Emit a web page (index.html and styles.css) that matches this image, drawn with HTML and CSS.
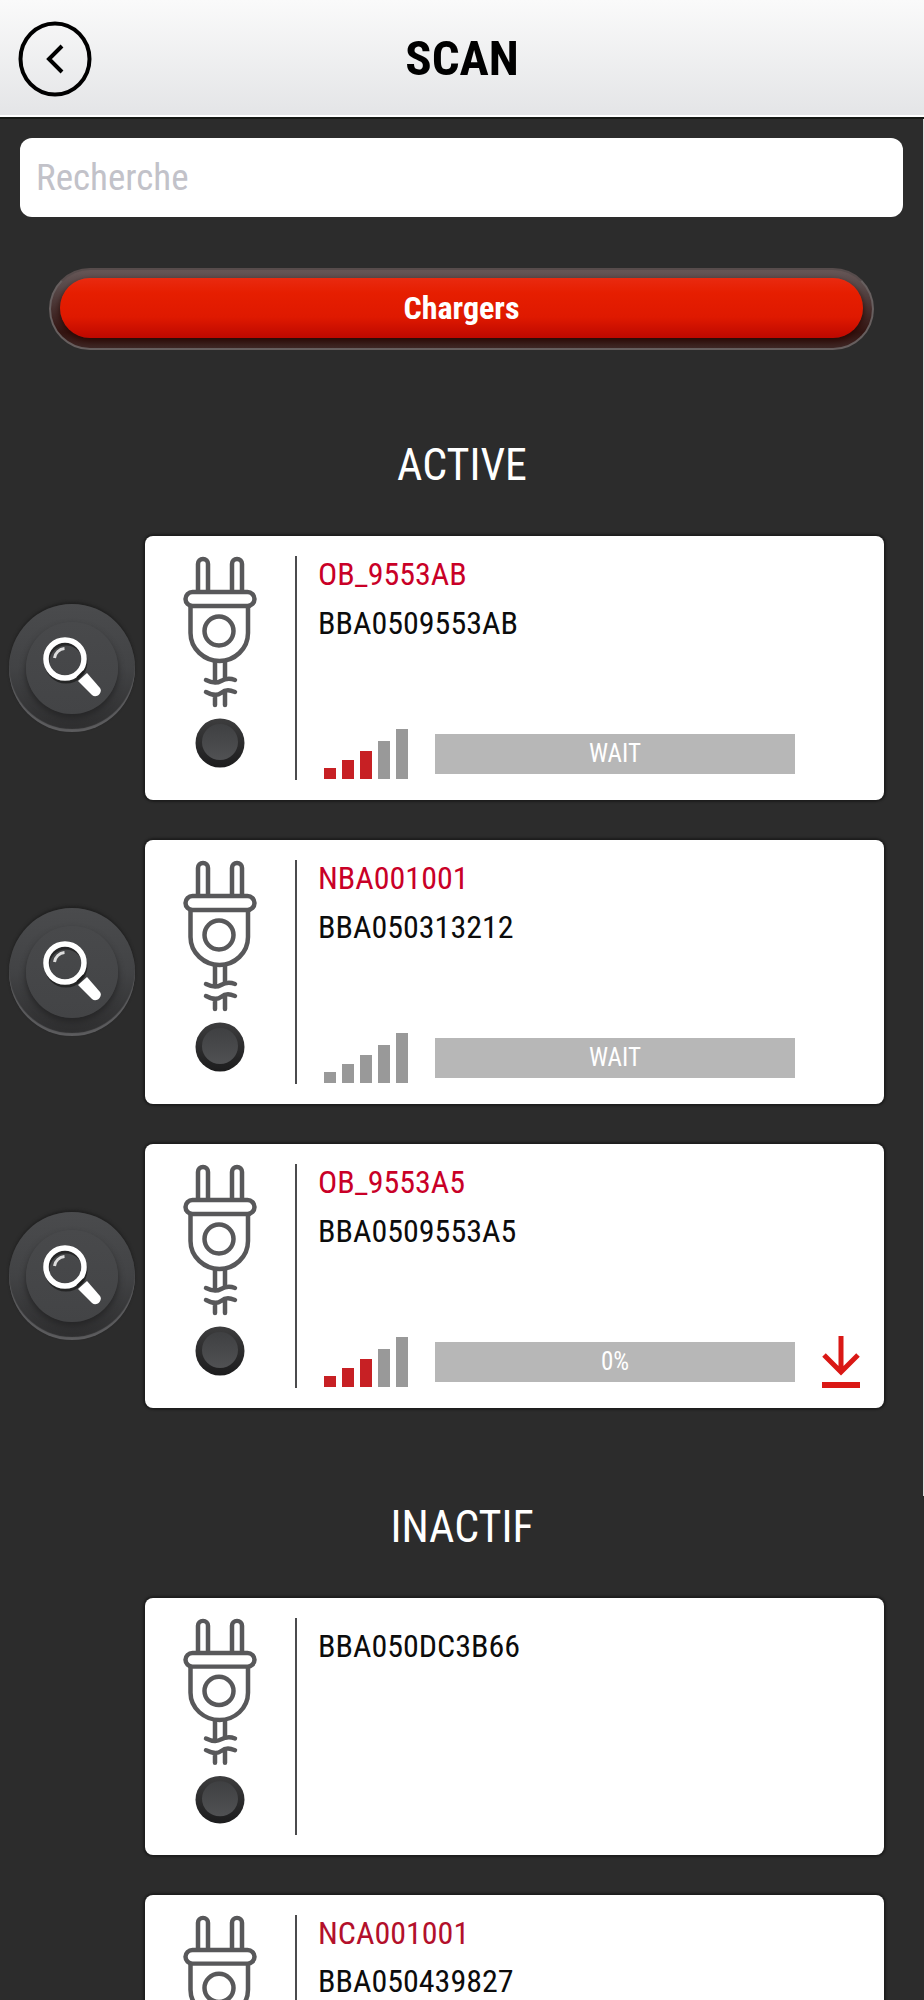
FILE: index.html
```html
<!DOCTYPE html>
<html lang="fr">
<head>
<meta charset="utf-8">
<meta name="viewport" content="width=device-width, initial-scale=1">
<title>Scan</title>
<link rel="stylesheet" href="styles.css">
</head>
<body>
<svg class="defs" aria-hidden="true">
  <defs>
    <linearGradient id="knob" x1="0" y1="0" x2="0" y2="1">
      <stop offset="0" stop-color="#3f4042"/><stop offset="1" stop-color="#505153"/>
    </linearGradient>
    <linearGradient id="knob-ring" x1="0" y1="0" x2="0" y2="1">
      <stop offset="0" stop-color="#3d3d3e"/><stop offset="1" stop-color="#1c1c1d"/>
    </linearGradient>
    <symbol id="plug" viewBox="0 0 74 213" preserveAspectRatio="none">
      <g fill="none" stroke="#58585a" stroke-width="4.500" stroke-linecap="round" stroke-linejoin="round">
        <path d="M15 34V8a5 5 0 0 1 10 0v26M49 34V8a5 5 0 0 1 10 0v26"/>
        <rect x="2.500" y="36" width="69" height="14" rx="7"/>
        <path d="M7.500 51v26c0 16 14 28 29 28s28.500-12 28.500-28V51"/>
        <circle cx="36" cy="75" r="14.500"/>
        <path d="M32 106v20M42 106v17"/>
        <path d="M23 124c4 2 10 4 15 1s9-3 14-1M23 136c4 2 10 5 15 1s9-3 14-1M32 140v9M42 137v12"/>
      </g>
      <circle cx="37" cy="187" r="24.500" fill="url(#knob-ring)"/>
      <circle cx="37" cy="186" r="18" fill="url(#knob)"/>
    </symbol>
    <symbol id="magnifier" viewBox="1 2 60 62">
      <g transform="translate(1 3)" opacity=".6" fill="none" stroke="#111">
        <circle cx="24" cy="24" r="19" stroke-width="5"/>
      </g>
      <circle cx="24" cy="24" r="19" fill="none" stroke="#fff" stroke-width="5.500"/>
      <path d="M13.500 23a11 11 0 0 1 10-9.500" fill="none" stroke="#ddd" stroke-width="3"/>
      <path d="m37 46 9-8 13 15c3 4-3 11-8 7Z" fill="#fff"/>
      <path d="m36 43 7-7" stroke="#1c1c1c" stroke-width="2"/>
    </symbol>
  </defs>
</svg>

<header class="topbar">
  <button class="back" type="button" aria-label="Retour">
    <svg viewBox="0 0 74 76" aria-hidden="true"><ellipse cx="37" cy="38" rx="34.500" ry="35.500"/><path d="M44 25 31 38l13 13"/></svg>
  </button>
  <h1 class="title">SCAN</h1>
</header>

<main class="content">
  <div class="upper">
    <form class="search">
      <input class="search-input" type="search" placeholder="Recherche" aria-label="Recherche">
    </form>
    <div class="tabs"><button class="tab" type="button"><span class="tab-face">Chargers</span></button></div>

    <section class="group active">
      <h2 class="group-title">ACTIVE</h2>
      <ul class="list">
        <li class="row">
          <button class="locate" type="button" aria-label="Localiser OB_9553AB"><span class="locate-face"><svg aria-hidden="true"><use href="#magnifier"/></svg></span></button>
          <article class="card">
            <div class="device"><svg aria-hidden="true"><use href="#plug"/></svg></div>
            <div class="info">
              <h3 class="name">OB_9553AB</h3>
              <p class="serial">BBA0509553AB</p>
              <div class="status">
                <div class="signal" role="img" aria-label="Signal 3 sur 5"><i class="bar b1 on"></i><i class="bar b2 on"></i><i class="bar b3 on"></i><i class="bar b4"></i><i class="bar b5"></i></div>
                <div class="progress">WAIT</div>
              </div>
            </div>
          </article>
        </li>
        <li class="row">
          <button class="locate" type="button" aria-label="Localiser NBA001001"><span class="locate-face"><svg aria-hidden="true"><use href="#magnifier"/></svg></span></button>
          <article class="card">
            <div class="device"><svg aria-hidden="true"><use href="#plug"/></svg></div>
            <div class="info">
              <h3 class="name">NBA001001</h3>
              <p class="serial">BBA050313212</p>
              <div class="status">
                <div class="signal" role="img" aria-label="Signal 0 sur 5"><i class="bar b1"></i><i class="bar b2"></i><i class="bar b3"></i><i class="bar b4"></i><i class="bar b5"></i></div>
                <div class="progress">WAIT</div>
              </div>
            </div>
          </article>
        </li>
        <li class="row">
          <button class="locate" type="button" aria-label="Localiser OB_9553A5"><span class="locate-face"><svg aria-hidden="true"><use href="#magnifier"/></svg></span></button>
          <article class="card">
            <div class="device"><svg aria-hidden="true"><use href="#plug"/></svg></div>
            <div class="info">
              <h3 class="name">OB_9553A5</h3>
              <p class="serial">BBA0509553A5</p>
              <div class="status">
                <div class="signal" role="img" aria-label="Signal 3 sur 5"><i class="bar b1 on"></i><i class="bar b2 on"></i><i class="bar b3 on"></i><i class="bar b4"></i><i class="bar b5"></i></div>
                <div class="progress">0%</div>
                <button class="download" type="button" aria-label="Télécharger"><svg viewBox="0 0 38 52" aria-hidden="true"><path d="M19 0v36M2 19l17 17 17-17" stroke-width="5"/><path d="M0 49h38" stroke-width="6"/></svg></button>
              </div>
            </div>
          </article>
        </li>
      </ul>
    </section>
  </div>

  <section class="group inactive">
    <h2 class="group-title">INACTIF</h2>
    <ul class="list">
      <li class="row">
        <article class="card">
          <div class="device"><svg aria-hidden="true"><use href="#plug"/></svg></div>
          <div class="info unnamed"><p class="serial">BBA050DC3B66</p></div>
        </article>
      </li>
      <li class="row">
        <article class="card">
          <div class="device"><svg aria-hidden="true"><use href="#plug"/></svg></div>
          <div class="info"><h3 class="name">NCA001001</h3><p class="serial">BBA050439827</p></div>
        </article>
      </li>
    </ul>
  </section>
</main>
</body>
</html>
```
FILE: styles.css
```css
* { box-sizing: border-box; }

body {
  margin: 0;
  background: #2c2c2c;
  color: #fff;
  font-family: "Roboto Condensed", "Liberation Sans Narrow", Roboto, sans-serif;
}

h1, h2, h3, p, ul { margin: 0; padding: 0; font-weight: 400; }
ul { list-style: none; }
svg { display: block; }
button { border: 0; padding: 0; background: none; font: inherit; color: inherit; cursor: pointer; }
.defs { position: absolute; width: 0; height: 0; }

.topbar {
  display: grid;
  grid-template-columns: 74px 1fr 74px;
  align-items: center;
  height: 119px;
  padding: 0 18px;
  border-bottom: 2px solid #161916;
  background: linear-gradient(#fafafa, #e4e5e7 98%, #fff 98%);
  color: #000;
}
.back svg { width: 74px; height: 76px; fill: none; stroke: #000; stroke-width: 4; }
.title { text-align: center; font-size: 49px; font-weight: 700; line-height: 60px; }

.upper { border-right: 1px solid #ddd; }
.search { padding: 19px 20px 0; }
.search-input {
  display: block;
  width: 100%;
  height: 79px;
  padding: 0 16px;
  border: 0;
  border-radius: 12px;
  background: #fff;
  color: #111;
  font: inherit;
  font-size: 37px;
}
.search-input::placeholder { color: #c2c2c9; opacity: 1; }

.tabs { padding: 51px 49px 0; }
.tab {
  display: block;
  width: 100%;
  padding: 8px 9px 10px;
  border: 2px solid #675f5f;
  border-top-color: #574c4c;
  border-radius: 42px;
  background: linear-gradient(#655555, #5a4b4b 20%, #341512 80%, #3f2725);
}
.tab-face {
  display: block;
  border-radius: 30px;
  background: linear-gradient(#e92a10, #e61e00 25%, #df1900 65%, #bd0800);
  box-shadow: 0 3px 6px #2a0804;
  font-size: 32px;
  font-weight: 700;
  line-height: 60px;
}

.group { padding: 0 40px 0 9px; }
.active { padding: 84px 39px 88px 9px; }
.group-title {
  padding-left: 31px;
  padding-bottom: 40px;
  text-align: center;
  font-size: 44px;
  line-height: 62px;
}
.list { display: grid; gap: 40px; }
.row { display: grid; grid-template-columns: 126px 1fr; column-gap: 10px; align-items: center; }

.locate {
  width: 126px;
  height: 128px;
  padding: 17px;
  border-radius: 50%;
  background: linear-gradient(#4a4b4d, #424345 50%, #2d2d2e);
  box-shadow: 0 -2px 3px #202020, inset 0 -3px 1px #5c5c5e;
}
.locate-face {
  display: grid;
  place-items: center;
  height: 92px;
  border-radius: 50%;
  background: linear-gradient(#48494b, #434446);
  box-shadow: 0 4px 6px #262627;
}
.locate svg { width: 60px; height: 62px; }

.card {
  grid-column: 2;
  display: grid;
  grid-template-columns: 152px 1fr;
  min-height: 264px;
  padding: 20px 0;
  border-radius: 8px;
  background: #fff;
  color: #0c0c0c;
  box-shadow: 0 0 2px 2px #1d1d1d;
}
.device { border-right: 2px solid #4b4b4d; display: flex; justify-content: center; }
.device svg { width: 74px; height: 213px; }
.info { display: flex; flex-direction: column; margin-top: -6px; padding: 0 24px 0 21px; }
.unnamed { padding-top: 10px; }
.name, .serial { font-size: 32px; line-height: 49px; }
.name { color: #c90027; }
.inactive .card { min-height: 257px; }
.inactive .device svg { height: 207px; }
.inactive .name, .inactive .serial { line-height: 48px; }
.inactive .name { color: #b3102b; }

.status {
  display: grid;
  grid-template-columns: 84px 1fr 38px;
  gap: 27px;
  align-items: center;
  height: 52px;
  margin-top: auto;
  padding-left: 6px;
}
.signal { display: flex; align-items: flex-end; justify-content: space-between; height: 50px; }
.bar { width: 12px; background: #999; }
.bar.on { background: #c72024; }
.b1 { height: 11px; }
.b2 { height: 19px; }
.b3 { height: 28px; }
.b4 { height: 38px; }
.b5 { height: 50px; }
.progress { background: #b7b7b7; color: #fff; text-align: center; font-size: 25px; line-height: 40px; }
.download svg { width: 38px; height: 52px; fill: none; stroke: #da1815; }
```
